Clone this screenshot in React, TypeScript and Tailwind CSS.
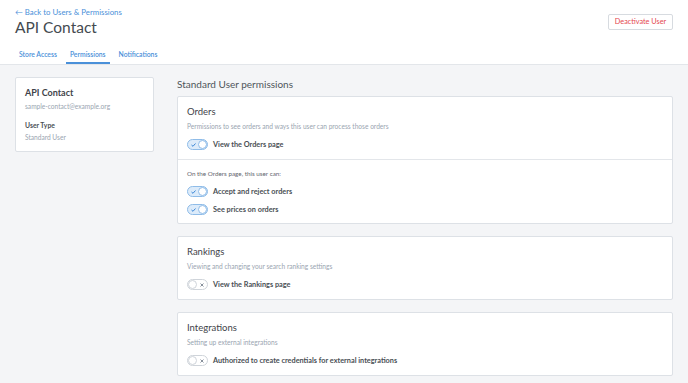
import React from "react";

function Toggle({ on }: { on: boolean }) {
  if (on) {
    return (
      <div className="relative w-[21px] h-[11px] rounded-full border border-[#8fbce8] bg-[#dcebfa] shrink-0">
        <svg className="absolute left-[3px] top-[2.5px]" width="5" height="4" viewBox="0 0 5 4">
          <path d="M0.5 2 L2 3.3 L4.5 0.5" fill="none" stroke="#3b86d6" strokeWidth="1" />
        </svg>
        <div className="absolute right-[0px] top-[0px] w-[9px] h-[9px] rounded-full bg-white border border-[#8fbce8]" />
      </div>
    );
  }
  return (
    <div className="relative w-[21px] h-[11px] rounded-full border border-[#cfd4da] bg-white shrink-0">
      <div className="absolute left-[0px] top-[0px] w-[9px] h-[9px] rounded-full bg-white border border-[#cfd4da]" />
      <svg className="absolute right-[3px] top-[3px]" width="4" height="4" viewBox="0 0 4 4">
        <path d="M0.5 0.5 L3.5 3.5 M3.5 0.5 L0.5 3.5" fill="none" stroke="#7a8591" strokeWidth="0.9" />
      </svg>
    </div>
  );
}

function Row({ on, label }: { on: boolean; label: string }) {
  return (
    <div className="flex items-center gap-[5px] h-[11px]">
      <Toggle on={on} />
      <span className="text-[7.3px] font-bold text-[#4a4f55] leading-[9px]">{label}</span>
    </div>
  );
}

function Card({ title, desc, children }: { title: string; desc: string; children?: React.ReactNode }) {
  return (
    <div className="bg-white border border-[#dde1e6] rounded-[2px] px-[9px] pt-[9px] pb-[9px]">
      <div className="text-[9.5px] text-[#3f444a] leading-[12px]">{title}</div>
      <div className="text-[6.6px] text-[#9aa5b1] mt-[4px] leading-[9px]">{desc}</div>
      <div className="mt-[8px]">{children}</div>
    </div>
  );
}

export default function App() {
  return (
    <div className="w-[688px] h-[383px] bg-[#f4f5f7] overflow-hidden" style={{ fontFamily: "Lato, 'Open Sans', sans-serif" }}>
      <div className="bg-white border-b border-[#e3e6ea]">
        <div className="flex justify-between px-[15px] pt-[7px]">
          <div>
            <div className="text-[7.8px] text-[#4a90d9] leading-[10px]">← Back to Users &amp; Permissions</div>
            <div className="text-[15.5px] text-[#444a50] leading-[20px]">API Contact</div>
          </div>
          <div className="pt-[7px]">
            <div className="border border-[#d7dbe0] rounded-[2px] h-[16px] w-[65px] flex items-center justify-center text-[7.3px] text-[#e5474f] bg-white">
              Deactivate User
            </div>
          </div>
        </div>
        <div className="flex px-[15px] mt-[13px] gap-[5px]">
          <div className="px-[4px] pb-[3px] leading-[9px] text-[6.8px] font-semibold text-[#4a90d9] border-b-2 border-transparent">Store Access</div>
          <div className="px-[4px] pb-[3px] leading-[9px] text-[6.8px] font-semibold text-[#4a90d9] border-b-2 border-[#4a90d9]">Permissions</div>
          <div className="px-[4px] pb-[3px] leading-[9px] text-[6.8px] font-semibold text-[#4a90d9] border-b-2 border-transparent">Notifications</div>
        </div>
      </div>
      <div className="flex px-[15px] pt-[12px] gap-[23px]">
        <div className="w-[139px] shrink-0">
          <div className="bg-white border border-[#dde1e6] rounded-[2px] px-[9px] pt-[9px] pb-[9px]">
            <div className="text-[9px] font-bold text-[#3f444a] leading-[12px]">API Contact</div>
            <div className="text-[6.6px] text-[#9aa5b1] mt-[3px] leading-[9px]">sample-contact@example.org</div>
            <div className="text-[6.8px] font-bold text-[#4a4f55] mt-[10px] leading-[9px]">User Type</div>
            <div className="text-[6.6px] text-[#9aa5b1] mt-[3px] leading-[9px]">Standard User</div>
          </div>
        </div>
        <div className="flex-1">
          <div className="text-[10px] text-[#4f555b] leading-[12px] mt-[1px]">Standard User permissions</div>
          <div className="mt-[6px] flex flex-col gap-[12px]">
            <div className="bg-white border border-[#dde1e6] rounded-[2px]">
              <div className="px-[9px] pt-[9px] pb-[9px]">
                <div className="text-[9.5px] text-[#3f444a] leading-[12px]">Orders</div>
                <div className="text-[6.6px] text-[#9aa5b1] mt-[4px] leading-[9px]">Permissions to see orders and ways this user can process those orders</div>
                <div className="mt-[8px]"><Row on label="View the Orders page" /></div>
              </div>
              <div className="border-t border-[#e3e6ea] px-[9px] pt-[10px] pb-[8px]">
                <div className="text-[6.3px] text-[#5f666d] leading-[8px]">On the Orders page, this user can:</div>
                <div className="mt-[8px] flex flex-col gap-[7px]">
                  <Row on label="Accept and reject orders" />
                  <Row on label="See prices on orders" />
                </div>
              </div>
            </div>
            <Card title="Rankings" desc="Viewing and changing your search ranking settings">
              <Row on={false} label="View the Rankings page" />
            </Card>
            <Card title="Integrations" desc="Setting up external integrations">
              <Row on={false} label="Authorized to create credentials for external integrations" />
            </Card>
          </div>
        </div>
      </div>
    </div>
  );
}
